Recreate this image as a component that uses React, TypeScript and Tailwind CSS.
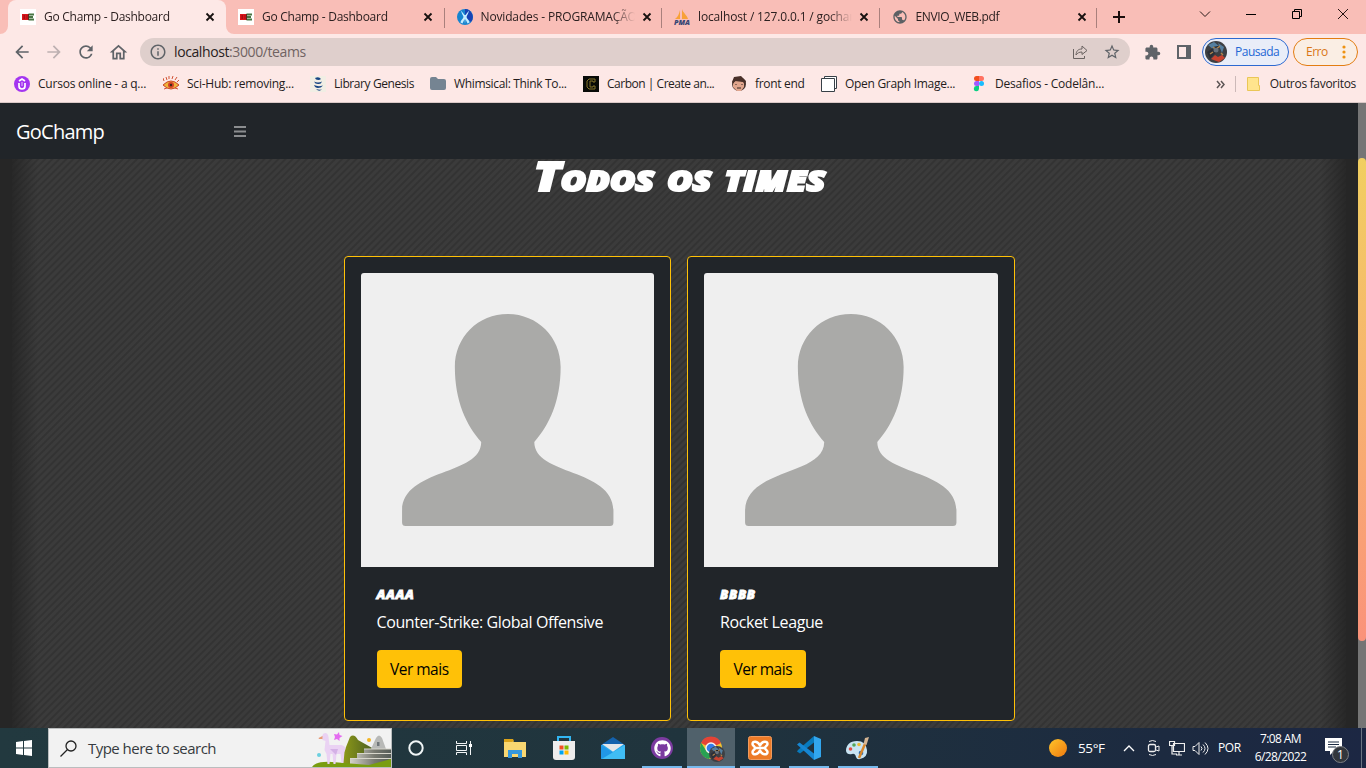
import type { ReactNode } from "react";
import { MdArrowBack, MdArrowForward, MdExtension, MdInfoOutline, MdOutlineHome, MdPublic, MdRefresh, MdStarBorder } from "react-icons/md";
import { FaGithub } from "react-icons/fa";

function GoChampIcon() {
  return (
    <svg className="size-4 shrink-0" viewBox="0 0 16 16">
      <path fill="#fff" d="M0 0h16v16H0z" />
      <path fill="#d8161c" d="M2 5h6.500v6H2z" />
      <path fill="#477543" d="M8.500 4.500h5.500v2H8.500zM8.500 9.500h5.500v2H8.500zM8.500 7h4.500v2h-4.500z" />
      <path d="M3.500 7h1.500M3.500 9h1.500M6.500 7h1M6.500 9h1" stroke="#7b090b" />
      <path d="M8.500 5v6" stroke="#5c2a20" />
    </svg>
  );
}

function NewsIcon() {
  return (
    <svg className="size-4 shrink-0" viewBox="0 0 16 16">
      <circle cx="8" cy="8" r="8" fill="#1684cf" />
      <path d="M8 0a8 8 0 0 1 6 13L8 8z" fill="#1742b4" />
      <path d="M4 1.500c.500 3 2 4.500 2.500 6.500-.500 2-3 3.500-3 5.500l2 1 2-4.500.500 5 .500-5 2 4.500 2-1c0-2-2.500-3.500-3-5.500.500-2 2-3.500 2.500-6.500L8.500 6h-1z" fill="#c5ecff" />
    </svg>
  );
}

function PmaIcon() {
  return (
    <svg className="size-4 shrink-0" viewBox="0 0 16 16">
      <path d="M6 1v9H1c3-2 4-5 5-9zM8 0c1 4 5 6 6 10H8z" fill="#f8a137" />
      <text x="0" y="15.500" textLength="16" lengthAdjust="spacingAndGlyphs" fill="#374675" fontSize="6.500" fontWeight="800" fontStyle="italic" fontFamily="Open Sans, sans-serif">PMA</text>
    </svg>
  );
}

function CloseIcon() {
  return (
    <svg className="size-3 shrink-0" viewBox="0 0 12 12">
      <path d="M2.500 2.500l7 7m0-7l-7 7" stroke="#17110f" strokeWidth="1.800" />
    </svg>
  );
}

function Tab({ icon, title, active, divider, text, width = "w-[217.500px]" }: { icon: ReactNode; title: string; active?: boolean; divider?: boolean; text: string; width?: string }) {
  return (
    <div className={`relative flex h-[34px] shrink-0 items-center pl-3 ${width} ${active ? "rounded-t-lg bg-[#fde8e6]" : ""}`}>
      {active && (
        <>
          <svg className="absolute -left-2 bottom-0 size-2" viewBox="0 0 8 8"><path fill="#fde8e6" d="M8 0v8H0a8 8 0 0 0 8-8" /></svg>
          <svg className="absolute -right-2 bottom-0 size-2" viewBox="0 0 8 8"><path fill="#fde8e6" d="M0 0v8h8a8 8 0 0 1-8-8" /></svg>
        </>
      )}
      {icon}
      <span className={`ml-2 w-[154px] overflow-hidden whitespace-nowrap text-[12px] leading-4 text-[#2c2020] [mask-image:linear-gradient(90deg,#000_85%,transparent)] ${text}`}>{title}</span>
      <span className="ml-[6px] flex"><CloseIcon /></span>
      {divider && <span className="absolute right-0 top-2 h-5 w-px bg-[#a9807c]" />}
    </div>
  );
}

function TabStrip() {
  return (
    <div className="flex h-[34px] bg-[#f9beb7] pl-2">
      <Tab active width="w-[218px]" icon={<GoChampIcon />} title="Go Champ - Dashboard" text="tracking-[-0.27px]" />
      <Tab divider width="w-[218.500px]" icon={<GoChampIcon />} title="Go Champ - Dashboard" text="tracking-[-0.27px]" />
      <Tab divider icon={<NewsIcon />} title="Novidades - PROGRAMAÇÃO" text="tracking-[-0.15px]" />
      <Tab divider icon={<PmaIcon />} title="localhost / 127.0.0.1 / gocham" text="tracking-[-0.15px]" />
      <Tab divider icon={<MdPublic className="size-4 shrink-0 text-[#5c6064]" />} title="ENVIO_WEB.pdf" text="tracking-[-0.35px]" />
      <svg className="ml-4 mt-[11px] size-3" viewBox="0 0 12 12"><path d="M6 0v12M0 6h12" stroke="#1b0e0d" strokeWidth="2" /></svg>
      <div className="ml-auto flex pr-[17px] pt-2">
        <svg className="mr-[34px] size-3" viewBox="0 0 12 12"><path d="M1 3.500l5 5 5-5" fill="none" stroke="#261917" /></svg>
        <svg className="mr-[34px] size-3" viewBox="0 0 12 12"><path d="M1 6.500h10" stroke="#000" /></svg>
        <svg className="mr-[34px] size-3" viewBox="0 0 12 12"><path d="M1.500 3.500h7v7h-7zM3.500 3.500v-2h7v7h-2" fill="none" stroke="#000" /></svg>
        <svg className="size-3" viewBox="0 0 12 12"><path d="M1 1l10 10M11 1L1 11" stroke="#261312" /></svg>
      </div>
    </div>
  );
}

function Avatar({ className }: { className: string }) {
  return (
    <svg className={className} viewBox="0 0 22 22">
      <circle cx="11" cy="11" r="11" fill="#3d3f43" />
      <path d="M3 4l6-3 5 4-5 4zM13 2l6 4-2 6z" fill="#547fa0" />
      <path d="M2 11l6-4 3 4-6 7z" fill="#2b2f38" />
      <path d="M6 18l4-4 3 2 4-2 3 3-6 4z" fill="#c94330" />
      <path d="M8 6l3 2 4-3M5 13l3-2M16 12l2 2" stroke="#b3844d" strokeWidth="1.500" />
      <circle cx="11" cy="9" r="2.500" fill="#69727c" />
    </svg>
  );
}

function Toolbar() {
  return (
    <div className="flex h-9 items-center bg-[#fde8e6] pl-3 pr-2 text-[#5f6368]">
      <MdArrowBack className="size-5" />
      <MdArrowForward className="ml-3 size-5 text-[#bdb0b1]" />
      <MdRefresh className="ml-3 size-5" />
      <MdOutlineHome className="ml-3 size-[21px]" />
      <div className="ml-[11px] flex h-7 w-[990px] items-center rounded-full bg-[#dfcfcc] pl-[9px] pr-[9px]">
        <MdInfoOutline className="size-[18px]" />
        <span className="ml-[7px] text-[14px] leading-5 tracking-[-0.4px] text-[#706362]"><span className="text-[#282121]">localhost</span>:3000/teams</span>
        <svg className="ml-auto size-4" viewBox="0 0 16 16" fill="none" stroke="#6a6361">
          <path d="M1.500 5v9.500h11V12M4 11c.3-4 2-6 6-6V2l5 4.500-5 4V8C7 8 5.500 9 4 11z" />
        </svg>
        <MdStarBorder className="ml-[15px] size-[18px]" />
      </div>
      <MdExtension className="ml-[14px] size-[17px]" />
      <svg className="ml-4 size-[14px]" viewBox="0 0 14 14"><path d="M1 1h12v12H1z" fill="none" stroke="#5f6368" strokeWidth="2" /><path d="M9 0h5v14H9z" fill="#5f6368" /></svg>
      <div className="ml-[11px] flex h-7 w-[87px] items-center rounded-full border border-[#2c69d1] bg-[#e9edf8] pl-0.5">
        <Avatar className="size-[22px]" />
        <span className="ml-2 text-[12px] tracking-[-0.5px] text-[#2367d5]">Pausada</span>
      </div>
      <div className="ml-1 flex h-7 w-[65px] items-center rounded-full border border-[#e37d12] bg-[#faeee4] pl-3">
        <span className="text-[12px] tracking-[-0.5px] text-[#d97616]">Erro</span>
        <svg className="ml-auto mr-[11px] h-[14px] w-1" viewBox="0 0 4 14" fill="#ee9212"><circle cx="2" cy="2" r="1.600" /><circle cx="2" cy="7" r="1.600" /><circle cx="2" cy="12" r="1.600" /></svg>
      </div>
    </div>
  );
}

function Bookmark({ icon, label, width, text }: { icon: ReactNode; label: string; width: string; text: string }) {
  return (
    <div className={`flex shrink-0 items-center gap-2 ${width}`}>
      {icon}
      <span className={`whitespace-nowrap text-[12px] leading-4 ${text}`}>{label}</span>
    </div>
  );
}

function Bookmarks() {
  return (
    <div className="flex h-[33px] items-center border-b border-[#dac8c6] bg-[#fde8e6] pb-1 pl-[14px] text-[#241c1c]">
      <Bookmark width="w-[149px]" text="tracking-[-0.22px]" label="Cursos online - a q..." icon={<svg className="size-4" viewBox="0 0 16 16"><circle cx="8" cy="8" r="8" fill="#a435f0" /><path d="M5 7v3a3 3 0 0 0 6 0V7M5 5l3-2 3 2" fill="none" stroke="#fff" strokeWidth="1.700" /><path d="M8 6v4" stroke="#e6c5fb" /></svg>} />
      <Bookmark width="w-[147px]" text="tracking-[-0.22px]" label="Sci-Hub: removing..." icon={<svg className="size-4" viewBox="0 0 16 16"><path d="M0 9q8-8 16 0-8 8-16 0" fill="#efb43b" stroke="#ca472c" /><circle cx="8" cy="9" r="3" fill="#d54127" /><circle cx="8" cy="9" r="1.200" fill="#3c2719" /><path d="M1 5L0 2m4 2L3 1m3 2V0m3 3l1-3m2 4l2-3m0 5l2-2M1 13l3-1m8 0l3 1" stroke="#d15335" /></svg>} />
      <Bookmark width="w-[120px]" text="tracking-[-0.42px]" label="Library Genesis" icon={<svg className="size-4" viewBox="0 0 16 16"><path d="M0 0h16v16H0z" fill="#f1eee4" /><path d="M5 2q4-2 6 1-2 1.500-5 .500zM4 5.500q4 2 8 0-1 3-4 2.500-3 0-4-2.500zM4 9q4 2 9 .500-2 2.500-5 2.500-3 0-4-3zM6 13q3 1 6 .500-3 2.500-6-.500z" fill="#174684" /></svg>} />
      <Bookmark width="w-[153px]" text="tracking-[-0.34px]" label="Whimsical: Think To..." icon={<svg className="size-4" viewBox="0 0 16 16"><path d="M0 3q0-2 2-2h4l2 2h6q2 0 2 2v7q0 2-2 2H2q-2 0-2-2z" fill="#758492" /></svg>} />
      <Bookmark width="w-[148px]" text="tracking-[-0.48px]" label="Carbon | Create an..." icon={<svg className="size-4" viewBox="0 0 16 16"><path d="M0 0h16v16H0z" fill="#090b08" /><path d="M12 5V3H6L4 5v6l2 2h6v-3h-2v1H7V5h3v1h2z" fill="none" stroke="#85752a" /></svg>} />
      <Bookmark width="w-[90px]" text="tracking-[-0.3px]" label="front end" icon={<svg className="size-4" viewBox="0 0 16 16"><circle cx="8" cy="8" r="7" fill="#49352f" /><path d="M2 7l4-3 7 2v5l-3 4H6l-4-4z" fill="#e1a58d" /><path d="M1 6l2-5 7-1 5 5-1 4-2-3-8-1-2 3z" fill="#493029" /><path d="M5 8v1m6-1v1M6 12h4" stroke="#332722" /></svg>} />
      <Bookmark width="w-[150px]" text="tracking-[-0.3px]" label="Open Graph Image..." icon={<svg className="size-4" viewBox="0 0 16 16"><path d="M3.500.500h12v12H3.500z" fill="#fff" stroke="#374047" /><path d="M.500 2.500h13v13H.500z" fill="#fff" stroke="#374047" /></svg>} />
      <Bookmark width="w-[150px]" text="tracking-[-0.2px]" label="Desafios - Codelân..." icon={<svg className="size-4" viewBox="0 0 16 16"><path d="M5.500 0H8v5H5.500a2.500 2.500 0 0 1 0-5" fill="#f24e1e" /><path d="M8 0h2.500a2.500 2.500 0 0 1 0 5H8z" fill="#ff7262" /><path d="M5.500 5H8v5H5.500a2.500 2.500 0 0 1 0-5" fill="#a259ff" /><circle cx="10.500" cy="7.500" r="2.500" fill="#1abcfe" /><path d="M5.500 10H8v3a2.600 2.600 0 1 1-2.500-3" fill="#0acf83" /></svg>} />
      <svg className="ml-auto size-[9px]" viewBox="0 0 9 9"><path d="M1 1l3 3.500L1 8M5 1l3 3.500L5 8" fill="none" stroke="#5c5555" strokeWidth="1.500" /></svg>
      <span className="ml-[10px] h-4 w-px bg-[#ccb9b8]" />
      <svg className="ml-[11px] h-[14px] w-[13px]" viewBox="0 0 13 14"><path d="M.500.500h11v8h1v5H.500z" fill="#ffe48d" stroke="#eac657" /></svg>
      <span className="ml-[10px] mr-[10px] whitespace-nowrap text-[12px] tracking-[-0.3px]">Outros favoritos</span>
    </div>
  );
}

function TeamCard({ name, game }: { name: string; game: string }) {
  return (
    <article className="h-[465px] w-[327.500px] shrink-0 rounded-[4px] border border-[#ffc107] bg-[#212529] p-4">
      <svg className="block h-[294px] w-full rounded-t-[3px] bg-[#efefef]" viewBox="0 0 293 294" preserveAspectRatio="none">
        <path fill="#aaaaa8" d="M146.500 41C176 41 199.300 64 199.300 94C199.300 128 188 152 173 169C173 203 252 195 252 238V249.500Q252 253 248.500 253H44.500Q41 253 41 249.500V238C41 195 120 203 120 169C105 152 93.700 128 93.700 94C93.700 64 117 41 146.500 41Z" />
      </svg>
      <div className="px-4 pt-4 text-white">
        <h2 className="h-[22px] text-[13px] font-extrabold italic leading-[22px] tracking-[0.7px] [-webkit-text-stroke:0.8px_white]">{name}</h2>
        <p className="mt-[5px] whitespace-nowrap text-[16px] leading-6 tracking-[-0.4px]">{game}</p>
        <button className="mt-4 h-[38px] w-[85.500px] rounded-[4px] bg-[#ffc107] pt-px text-[15.500px] tracking-[-0.5px] text-black">Ver mais</button>
      </div>
    </article>
  );
}

function Page() {
  return (
    <div className="flex h-[625px]">
      <div className="flex w-[1358px] flex-col">
        <nav className="flex h-14 shrink-0 items-center bg-[#212529] px-4 text-white">
          <span className="w-[218px] pt-0.5 text-[20px] tracking-[-0.75px]">GoChamp</span>
          <svg className="h-[11px] w-3" viewBox="0 0 12 11"><path d="M0 1h12M0 5.500h12M0 10h12" stroke="#8b8d8f" strokeWidth="1.900" /></svg>
        </nav>
        <main className="flex-1 overflow-hidden bg-[#262626] px-3">
          <div className="h-full bg-[linear-gradient(90deg,rgba(34,34,34,.75),transparent_26px,transparent_calc(100%-26px),rgba(34,34,34,.75)),repeating-linear-gradient(135deg,#3b3b3b_0,#3b3b3b_2px,#333_3px,#333_4px,#3b3b3b_5px)]">
            <h1 className="flex h-[97px] justify-center pl-0.5 text-[40px] font-extrabold italic leading-[34px] tracking-[0.2px] text-white [-webkit-text-stroke:2.2px_white] [font-variant:small-caps]">
              <span className="h-[34px] origin-center scale-x-[1.220] whitespace-nowrap">Todos os times</span>
            </h1>
            <div className="flex justify-center gap-4">
              <TeamCard name="AAAA" game="Counter-Strike: Global Offensive" />
              <TeamCard name="BBBB" game="Rocket League" />
            </div>
          </div>
        </main>
      </div>
      <div className="w-2 bg-[#757575] pt-[55px]">
        <div className="h-[483px] rounded-full bg-linear-to-b from-[#f1cf60] to-[#fa927a]" />
      </div>
    </div>
  );
}

function SearchArt() {
  return (
    <svg className="ml-auto h-[38px] w-[79px]" viewBox="0 0 79 38">
      <defs><linearGradient id="hill" x2="1"><stop stopColor="#8f9b18" /><stop offset="1" stopColor="#4b5d21" /></linearGradient><linearGradient id="stone" x2="1"><stop stopColor="#d4d3ca" /><stop offset=".600" stopColor="#77786f" /><stop offset="1" stopColor="#555b57" /></linearGradient></defs>
      <path d="M30 28l8-20q4-4 8 3l16 9v17H30z" fill="url(#hill)" />
      <path d="M59 20l5-11q3-5 6 0l4 11z" fill="#b8b9b7" /><path d="M65 13h2.500v4H65z" fill="#71767a" />
      <path d="M52 20h27v5H52zM45 24h34v5H45zM38 29h41v8H38z" fill="url(#stone)" />
      <path d="M52 20h27M45 24.500h34M38 29.500h41" stroke="#d8d6cc" />
      <path d="M0 38q4-6 20-5l37 3 22-6v8z" fill="#799d10" />
      <path d="M10 7q1-3 3-3 3 0 3.500 4l1 8h12q4 1 4 4l-1 3-1 11h-2l-1-9-4 0-1 10h-2l-1-10h-2l-1 10h-2l-1-10-2-4 1-9-3-1z" fill="#ead2f3" />
      <path d="M6.500 9l4-2v3H7z" fill="#e79b78" /><path d="M18 20h8l-2 6z" fill="#d4b1e6" />
      <path d="M22 5l3 .500L27 3l.500 3 3 1-3 2v3l-2.500-2-3 1 1-3z" fill="#e46cf0" />
      <circle cx="57" cy="11" r="2" fill="#f4b522" /><circle cx="7" cy="26" r="2" fill="#6bd0e0" />
    </svg>
  );
}

function Slot({ children, running, active }: { children: ReactNode; running?: boolean; active?: boolean }) {
  return (
    <div className={`relative flex h-10 w-12 items-center justify-center ${active ? "bg-[#50616b]" : ""}`}>
      {children}
      {running && <span className={`absolute bottom-0 h-0.5 bg-[#76b9ed] ${active ? "w-12" : "w-10"}`} />}
    </div>
  );
}

function TaskIcons() {
  return (
    <div className="flex gap-px">
      <Slot><svg className="size-4" viewBox="0 0 16 16"><circle cx="8" cy="8" r="6.700" fill="none" stroke="#f0f5f6" strokeWidth="2" /></svg></Slot>
      <div className="-ml-px"><Slot><svg className="size-4" viewBox="0 0 16 16"><path d="M.500 1v2.500h10V1M.500 15v-2.500h10V15M.500 5.500h10v5H.500zM14.500 1v14" fill="none" stroke="#f2f5f6" /><path d="M13 4h3v3h-3z" fill="#fff" /></svg></Slot></div>
      <div className="ml-0.5"><Slot><svg className="h-[19px] w-[22px]" viewBox="0 0 22 19"><path d="M0 1h8l2 2h12v15H0z" fill="#f9d771" /><path d="M0 0h9l1 2-2 1H0z" fill="#dba31a" /><path d="M4 11h14v8h-4v-4H8v4H4z" fill="#3597dc" /></svg></Slot></div>
      <Slot><svg className="size-6" viewBox="0 0 24 24"><path d="M6 6V1h12v5" fill="none" stroke="#32b6f2" strokeWidth="2" /><path d="M1 5h22v16q0 3-3 3H4q-3 0-3-3z" fill="#eeeded" /><path fill="#f25022" d="M7.500 9.500h4v4h-4z" /><path fill="#7fba00" d="M12.500 9.500h4v4h-4z" /><path fill="#00a4ef" d="M7.500 14.500h4v4h-4z" /><path fill="#ffb900" d="M12.500 14.500h4v4h-4z" /></svg></Slot>
      <Slot><svg className="h-[22px] w-6" viewBox="0 0 24 22"><path d="M0 8L12 0l12 8v3H0z" fill="#1462ad" /><path d="M0 8h24v14H0z" fill="#29a9ed" /><path d="M1 7h22l-10 7q-1 1-2 0z" fill="#e4e6e9" /><path d="M0 8l11 7q1 1 2 0L0 22z" fill="#2197e6" /><path d="M24 8L1 22h23z" fill="#40bdf5" /></svg></Slot>
      <Slot running><div className="flex size-[22px] items-center justify-center rounded-full bg-[#7b3ba0]"><FaGithub className="size-[17px] text-white" /></div></Slot>
      <Slot running active><svg className="size-[24px]" viewBox="0 0 24 24"><circle cx="12" cy="12" r="11" fill="#f1c22f" /><path d="M12 12L2 7a11 11 0 0 1 20 0z" fill="#e44336" /><path d="M2.300 7L8 16l5 2-3 5A11 11 0 0 1 2.300 7" fill="#28a153" /><circle cx="12" cy="12" r="5.700" fill="#f4f5f6" /><circle cx="12" cy="12" r="4.300" fill="#347be8" /></svg><Avatar className="absolute left-[22px] top-[18px] size-4" /></Slot>
      <Slot running><svg className="size-6" viewBox="0 0 24 24"><rect x=".500" y=".500" width="23" height="23" rx="2" fill="#ec7a27" stroke="#f09b5e" /><path d="M12 9.500C10 5 4.500 4.500 4.500 8c0 2 2.500 2 2.500 4s-2.500 2-2.500 4c0 3.500 5.500 3 7.500-1.500 2 4.500 7.500 5 7.500 1.500 0-2-2.500-2-2.500-4s2.500-2 2.500-4c0-3.500-5.500-3-7.500 1.500z" fill="none" stroke="#fff" strokeWidth="2.500" strokeLinejoin="round" /><path d="M8 12h8" stroke="#fff" strokeWidth="2.500" /></svg></Slot>
      <Slot running><svg className="size-6" viewBox="0 0 24 24"><path d="M17 0v6.500L3 17.500 0 15.500 1 14z" fill="#087abd" /><path d="M0 8.500l2.500-2L17 17.500V24z" fill="#1686d2" /><path d="M17 0l7 3v18l-7 3z" fill="#32a6ee" /></svg></Slot>
      <Slot running><svg className="size-6" viewBox="0 0 24 24"><path d="M11 5C4 5 0 9 0 15q1 4 6 3 3-1 4 3 1 3 4 2 8-2 7-9Q20 5 11 5" fill="#c9e4f3" /><circle cx="4.500" cy="13" r="1.800" fill="#df4e44" /><circle cx="8" cy="9" r="1.800" fill="#54a65a" /><circle cx="13" cy="8.500" r="1.800" fill="#edb936" /><circle cx="15" cy="17" r="2.300" fill="#2669b4" /><path d="M13 22l6-14" stroke="#d8882e" strokeWidth="2.500" /><path d="M17.500 8L19 2l4-1-2.500 8z" fill="#d5b593" /></svg></Slot>
    </div>
  );
}

function Taskbar() {
  return (
    <footer className="flex h-10 items-center bg-[linear-gradient(90deg,#22393f,#20343d_50%,#1c2a40_85%,#1c2743)] text-white">
      <div className="flex w-12 justify-center"><svg className="size-4" viewBox="0 0 16 16" fill="#fff"><path d="M0 2l7-1v6.500H0zM8 1l8-1v7.500H8zM0 8.500h7V15l-7-1zM8 8.500h8V16l-8-1z" /></svg></div>
      <div className="flex h-10 w-[344px] items-center border border-[#babdbe] bg-[#f2f2f2] pl-[11px]">
        <svg className="size-[17px]" viewBox="0 0 17 17"><circle cx="11" cy="6" r="5" fill="none" stroke="#222" strokeWidth="1.300" /><path d="M7.500 9.500L.500 16.500" stroke="#222" strokeWidth="1.300" /></svg>
        <span className="ml-[11px] whitespace-nowrap text-[15px] tracking-[-0.53px] text-[#363b40]">Type here to search</span>
        <SearchArt />
      </div>
      <TaskIcons />
      <div className="ml-auto flex h-full items-center pr-1">
        <svg className="size-[18px]" viewBox="0 0 18 18"><defs><linearGradient id="sun" y2="1"><stop stopColor="#ffc52a" /><stop offset="1" stopColor="#ee7910" /></linearGradient></defs><circle cx="9" cy="9" r="9" fill="url(#sun)" /></svg>
        <span className="ml-[11px] w-[45px] whitespace-nowrap pt-px text-[13.500px] tracking-[-0.4px]">55°F</span>
        <svg className="h-2 w-3" viewBox="0 0 12 8"><path d="M1 7l5-5 5 5" fill="none" stroke="#fff" strokeWidth="1.300" /></svg>
        <svg className="ml-[10px] size-4" viewBox="0 0 16 16"><rect x="3.500" y="4.500" width="7" height="7" rx="1.500" fill="none" stroke="#eee" strokeWidth="1.300" /><path d="M11 7l3-1v5l-3-1M4 1.500q3.500-2 7 0M4 14.500q3.500 2 7 0" fill="none" stroke="#eee" /></svg>
        <svg className="ml-2 size-4" viewBox="0 0 16 16"><path d="M4.500 3.500h11v8h-11zM7 15h6M10 12v3M.500 1.500h5v4h-5zM3 6v8h5" fill="none" stroke="#eee" strokeWidth="1.200" /></svg>
        <svg className="ml-[7px] size-[17px]" viewBox="0 0 17 16"><path d="M1 6h2l4-4v12l-4-4H1zM9 6q2 2 0 4M11 4q4 4 0 8M13 2q6 6 0 12" fill="none" stroke="#eee" /></svg>
        <span className="ml-[9px] w-[24px] text-[12px] tracking-[-0.35px]">POR</span>
        <div className="ml-2 w-[61px] whitespace-nowrap text-center text-[12px] leading-[18px] tracking-[-0.6px]"><div>7:08 AM</div><div>6/28/2022</div></div>
        <div className="relative ml-[14px] h-5 w-[36px]">
          <svg className="h-[17px] w-[17px]" viewBox="0 0 17 17"><path d="M0 0h17v13H9l-4 4v-4H0z" fill="#fff" /><path d="M3 4h11M3 6.500h11M3 9h8" stroke="#1d2c43" strokeWidth="1.200" /></svg>
          <span className="absolute left-[7px] top-[8px] flex size-[17px] items-center justify-center rounded-full border border-[#7d8085] bg-[#32363c] text-[12px]">1</span>
        </div>
        <span className="h-full w-px bg-[#697482]" />
      </div>
    </footer>
  );
}

export default function App() {
  return (
    <div className="h-[768px] w-[1366px] overflow-hidden font-['Open_Sans',sans-serif]">
      <TabStrip />
      <Toolbar />
      <Bookmarks />
      <Page />
      <Taskbar />
    </div>
  );
}
